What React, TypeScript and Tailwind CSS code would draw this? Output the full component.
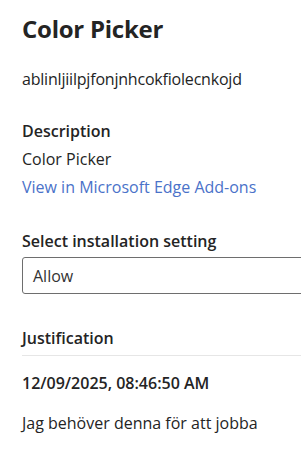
export default function App() {
  return (
    <div className="w-[301px] h-[464px] overflow-hidden bg-white pl-[22px] text-[#242424] font-['Open_Sans',sans-serif]">
      <h1 className="pt-[15px] text-[24px] font-bold leading-[28px] tracking-[-0.25px]">Color Picker</h1>
      <div className="mt-[26px] text-[16px] leading-[20px] tracking-[-0.2px]">ablinljiilpjfonjnhcokfiolecnkojd</div>

      <div className="mt-[32px] text-[16px] font-semibold leading-[20px]">Description</div>
      <div className="mt-[8px] text-[16px] leading-[20px]">Color Picker</div>
      <a className="mt-[8px] block text-[16px] leading-[20px] text-[#4a72c9]">View in Microsoft Edge Add-ons</a>

      <div className="mt-[34px] text-[16px] font-semibold leading-[20px]">Select installation setting</div>
      <div className="mt-[6px] -mr-[10px] flex h-[37px] items-center rounded-[3px] border border-[#6e6e6e] pl-[10px] text-[16px] text-[#333]">
        Allow
      </div>

      <div className="mt-[34px] border-b border-[#e6e6e6] pb-[7px] text-[16px] font-semibold leading-[20px]">Justification</div>
      <div className="mt-[17px] text-[16px] font-semibold leading-[20px]">12/09/2025, 08:46:50 AM</div>
      <div className="mt-[20px] text-[16px] leading-[20px]">Jag behöver denna för att jobba</div>
    </div>
  );
}
